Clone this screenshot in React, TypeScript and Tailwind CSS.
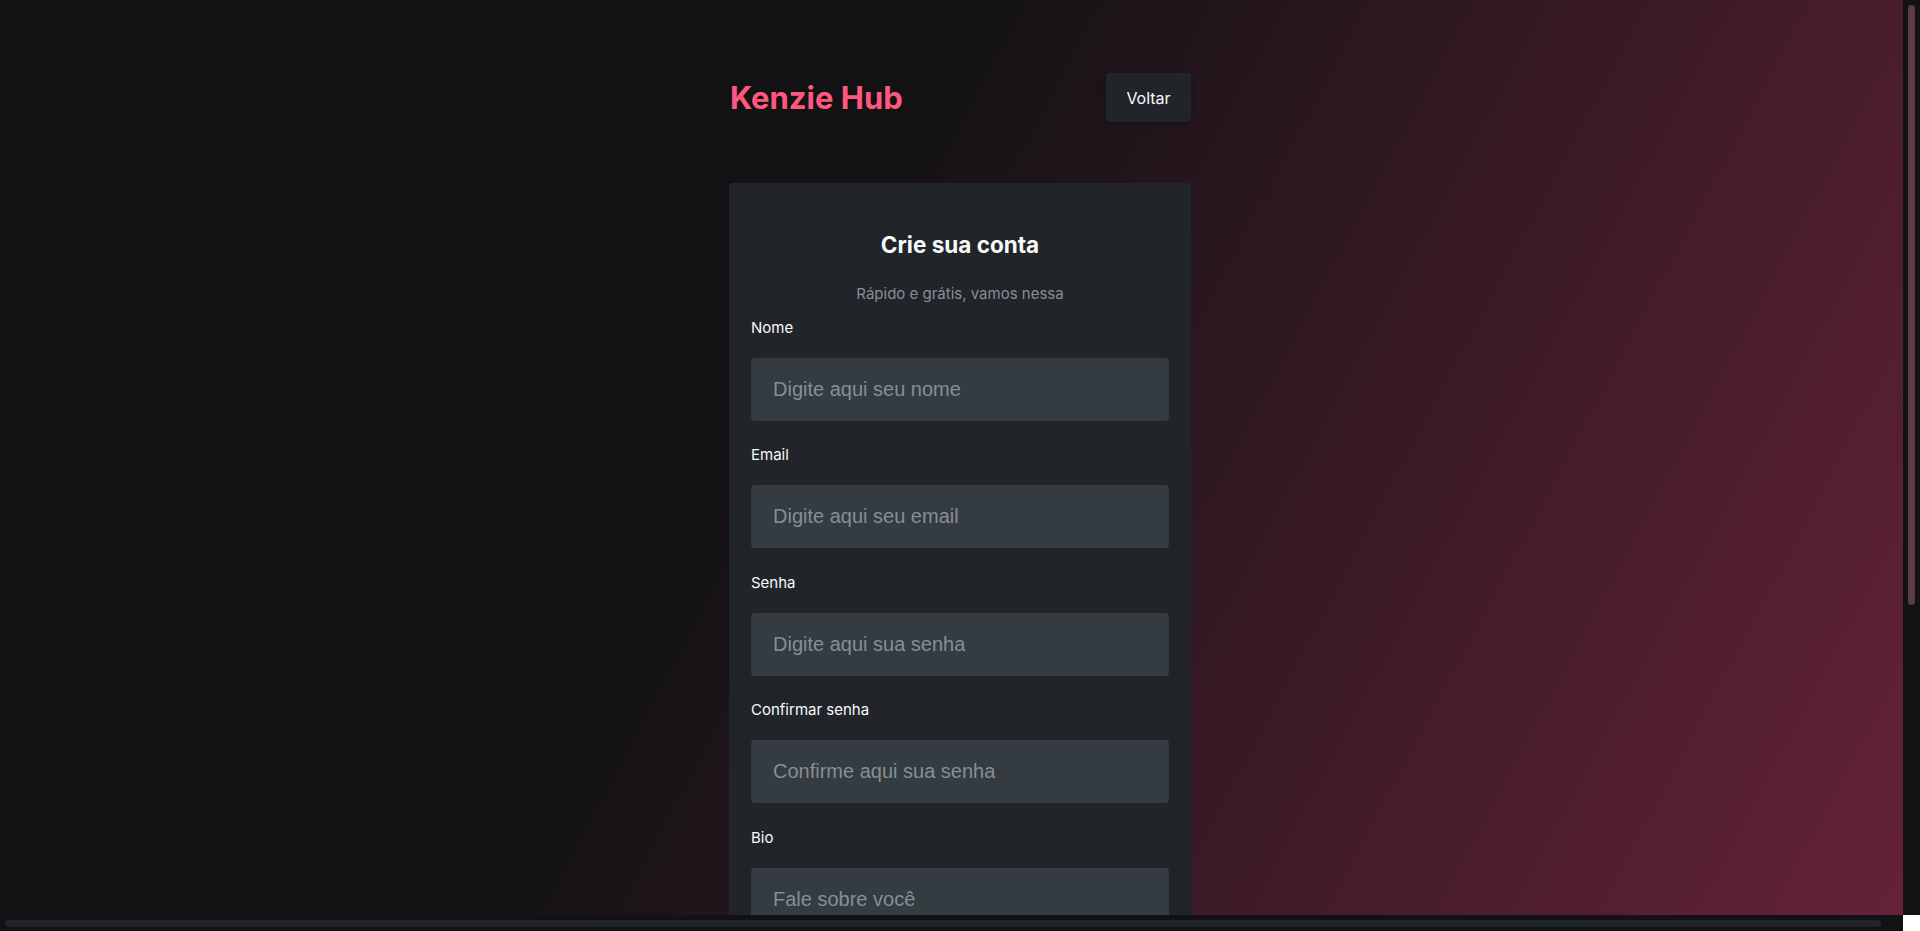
const fields: { label: string; placeholder: string }[] = [
  { label: "Nome", placeholder: "Digite aqui seu nome" },
  { label: "Email", placeholder: "Digite aqui seu email" },
  { label: "Senha", placeholder: "Digite aqui sua senha" },
  { label: "Confirmar senha", placeholder: "Confirme aqui sua senha" },
  { label: "Bio", placeholder: "Fale sobre você" },
  { label: "Contato", placeholder: "Opção de contato" },
];

function Field({ label, placeholder }: { label: string; placeholder: string }) {
  return (
    <div className="flex flex-col gap-[20px]">
      <label className="text-[15px] leading-[20px] text-[#F8F9FA]">{label}</label>
      <input
        placeholder={placeholder}
        className="h-[63px] w-full rounded-[4px] bg-[#343B41] px-[22px] font-['Liberation_Sans',Arial,sans-serif] text-[20px] text-[#F8F9FA] outline-none placeholder:text-[#868E96]"
      />
    </div>
  );
}

export default function App() {
  return (
    <div className="flex h-[931px] w-full flex-col overflow-hidden bg-[#121214] font-['Inter',sans-serif]">
      <div className="flex min-h-0 flex-1">
        {/* page viewport */}
        <main className="min-w-0 flex-1 overflow-hidden bg-[linear-gradient(118deg,#121214_40%,#652239_100%)]">
          <div className="flex w-[1920px] flex-col items-center pt-[73px] pb-[75px]">
            <header className="flex w-[462px] items-center justify-between">
              <h1 className="pl-px text-[31px] font-bold leading-[49px] text-[#FF577F]">Kenzie Hub</h1>
              <button className="flex h-[49px] w-[85px] items-center justify-center rounded-[4px] bg-[#212529] text-[16px] text-[#F8F9FA] shadow-[0_2px_6px_rgba(0,0,0,0.25)]">
                Voltar
              </button>
            </header>

            <form className="mt-[61px] flex w-[462px] flex-col rounded-[4px] bg-[#212529] px-[22px] pt-[48px] pb-[42px]">
              <h2 className="text-center text-[22.5px] font-bold leading-[28px] text-[#F8F9FA]">Crie sua conta</h2>
              <p className="mt-[24.5px] text-center text-[15px] leading-[20px] text-[#868E96]">
                Rápido e grátis, vamos nessa
              </p>
              <div className="mt-[14px] flex flex-col gap-[24.5px]">
                {fields.map((f) => (
                  <Field key={f.label} label={f.label} placeholder={f.placeholder} />
                ))}
                <div className="flex flex-col gap-[20px]">
                  <label className="text-[15px] leading-[20px] text-[#F8F9FA]">Selecionar módulo</label>
                  <div className="flex h-[63px] items-center rounded-[4px] bg-[#343B41] px-[22px] font-['Liberation_Sans',Arial,sans-serif] text-[20px] text-[#868E96]">
                    Primeiro módulo
                  </div>
                </div>
              </div>
              <button
                type="button"
                className="mt-[30px] h-[60px] rounded-[4px] bg-[#59323F] text-[20px] font-medium text-white"
              >
                Cadastrar
              </button>
            </form>
          </div>
        </main>

        {/* vertical scrollbar */}
        <div className="w-[17px] shrink-0 bg-[#121214] pt-[5px] pl-[5px] pr-[5px]">
          <div className="h-[600px] w-[7px] rounded-full bg-[#5c3a48]" />
        </div>
      </div>

      {/* horizontal scrollbar + corner */}
      <div className="flex h-[16px] shrink-0">
        <div className="flex-1 bg-[#121214] px-[5px] pt-[5px]">
          <div className="h-[7px] w-[1876px] rounded-full bg-[#212529]" />
        </div>
        <div className="w-[17px] bg-white" />
      </div>
    </div>
  );
}
